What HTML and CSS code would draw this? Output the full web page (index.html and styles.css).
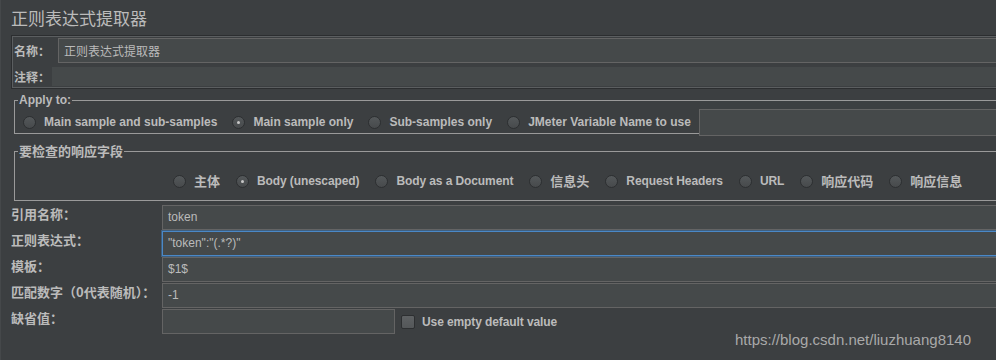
FILE: index.html
```html
<!DOCTYPE html>
<html lang="en">
<head>
  <meta charset="UTF-8">
  <title>正则表达式提取器</title>
  <link rel="stylesheet" href="styles.css">
</head>
<body>
  <div class="page">
    <div class="title">正则表达式提取器</div>

    <div class="name-panel">
      <div class="name-row">
        <span class="label">名称：</span>
        <div class="field name-field">正则表达式提取器</div>
      </div>
      <div class="comment-row">
        <span class="label">注释：</span>
        <div class="field comment-field"></div>
      </div>
    </div>

    <fieldset class="group apply">
      <legend>Apply to:</legend>
      <div class="options">
        <label class="option"><span class="radio"></span>Main sample and sub-samples</label>
        <label class="option"><span class="radio checked"></span>Main sample only</label>
        <label class="option"><span class="radio"></span>Sub-samples only</label>
        <label class="option"><span class="radio"></span>JMeter Variable Name to use</label>
        <div class="field var-field"></div>
      </div>
    </fieldset>

    <fieldset class="group fields">
      <legend>要检查的响应字段</legend>
      <div class="options">
        <label class="option cjk"><span class="radio"></span>主体</label>
        <label class="option"><span class="radio checked"></span>Body (unescaped)</label>
        <label class="option"><span class="radio"></span>Body as a Document</label>
        <label class="option cjk"><span class="radio"></span>信息头</label>
        <label class="option"><span class="radio"></span>Request Headers</label>
        <label class="option"><span class="radio"></span>URL</label>
        <label class="option cjk"><span class="radio"></span>响应代码</label>
        <label class="option cjk"><span class="radio"></span>响应信息</label>
      </div>
    </fieldset>

    <div class="form">
      <span class="label">引用名称：</span>
      <div class="field">token</div>
      <span class="label">正则表达式：</span>
      <div class="field focused">"token":"(.*?)"</div>
      <span class="label">模板：</span>
      <div class="field">$1$</div>
      <span class="label">匹配数字（0代表随机）：</span>
      <div class="field">-1</div>
      <span class="label">缺省值：</span>
      <div class="default-row">
        <div class="field default-field"></div>
        <label class="option check"><span class="checkbox"></span>Use empty default value</label>
      </div>
    </div>

    <div class="watermark">https://blog.csdn.net/liuzhuang8140</div>
  </div>
</body>
</html>
```

FILE: styles.css
```css
html, body {
  margin: 0;
  height: 100%;
  overflow: hidden;
}

body {
  background: #3c3f41;
  color: #bbbbbb;
  font-family: "Liberation Sans", "Noto Sans CJK SC", sans-serif;
  font-size: 12px;
  border-left: 1px solid #45484a;
}

.page {
  width: 1040px;
  position: relative;
  height: 360px;
}

.title {
  font-family: "Noto Sans CJK SC", sans-serif;
  font-size: 17px;
  line-height: 22px;
  padding: 7px 0 0 10px;
  height: 28px;
}

.label {
  font-family: "Noto Sans CJK SC", sans-serif;
  font-weight: bold;
  font-size: 12px;
  white-space: nowrap;
}

.field {
  background: #45494a;
  border: 1px solid #646464;
  box-sizing: border-box;
  height: 25px;
  line-height: 23px;
  padding: 0 5px;
  color: #bbbbbb;
  font-size: 12px;
  font-family: "Liberation Sans", "Noto Sans CJK SC", sans-serif;
}

.focused {
  border-color: #4a88c7;
  box-shadow: 0 0 0 1px #3e5f80;
}

/* name / comment panel */
.name-panel {
  margin-left: 10px;
  border: 1px solid #2c2e30;
  box-shadow: inset 0 0 0 1px #5b5e60;
  padding: 2px 0 2px 2px;
}

.name-row {
  display: flex;
  align-items: center;
  gap: 8px;
}

.name-field {
  flex: 1;
  font-family: "Noto Sans CJK SC", sans-serif;
}

.comment-row {
  display: flex;
  align-items: center;
  gap: 2px;
  margin-top: 4px;
}

.comment-field {
  flex: 1;
  height: 19px;
  border: none;
}

/* titled groups */
.group {
  margin: 0 0 0 13px;
  padding: 0;
  border: 1px solid #9a9a9a;
  min-width: 0;
  box-sizing: border-box;
}

.group legend {
  font-weight: bold;
  padding: 0 1px;
  margin-left: 3px;
  line-height: 14px;
}

.apply {
  margin-top: 4px;
  height: 41px;
}

.apply .options {
  display: flex;
  align-items: center;
  padding: 2px 0 0 8px;
  height: 26px;
}

.apply .option {
  letter-spacing: 0;
  margin-right: 15px;
}

.fields {
  margin-top: 9px;
  height: 58px;
}

.fields legend {
  font-family: "Noto Sans CJK SC", sans-serif;
  font-size: 13px;
  line-height: 16px;
}

.fields .options {
  display: flex;
  align-items: center;
  padding: 13px 0 0 158px;
}

.option {
  display: flex;
  align-items: center;
  gap: 8px;
  font-weight: bold;
  margin-right: 16px;
  white-space: nowrap;
  line-height: 18px;
  letter-spacing: -0.1px;
}

.fields .option {
  margin-right: 16px;
}

.option.cjk {
  font-family: "Noto Sans CJK SC", sans-serif;
  font-size: 13px;
  letter-spacing: 0;
}

.radio {
  width: 13px;
  height: 13px;
  border-radius: 50%;
  border: 1px solid #2d2f31;
  background: linear-gradient(#54585a, #474a4c);
  box-sizing: border-box;
  position: relative;
  flex-shrink: 0;
}

.radio.checked::after {
  content: "";
  position: absolute;
  left: 4px;
  top: 4px;
  width: 3px;
  height: 3px;
  border-radius: 50%;
  background: #c8c8c8;
}

.var-field {
  flex: 1;
  height: 27px;
  margin-left: -7px;
}

/* label / value rows */
.form {
  display: grid;
  grid-template-columns: 151px 1fr;
  row-gap: 1px;
  align-items: center;
  margin: 4px 0 0 10px;
}

.form .label {
  align-self: start;
  font-size: 13px;
  line-height: 17px;
}

.default-row {
  display: flex;
  align-items: center;
}

.default-field {
  width: 233px;
}

.check {
  margin-left: 6px;
  gap: 7px;
}

.checkbox {
  width: 14px;
  height: 14px;
  box-sizing: border-box;
  border: 1px solid #2d2f31;
  border-radius: 2px;
  background: linear-gradient(#5e6163, #545759);
}

.watermark {
  position: absolute;
  left: 734px;
  top: 331px;
  font-size: 15px;
  color: #a9a9a9;
  font-family: "Liberation Sans", sans-serif;
}
```
